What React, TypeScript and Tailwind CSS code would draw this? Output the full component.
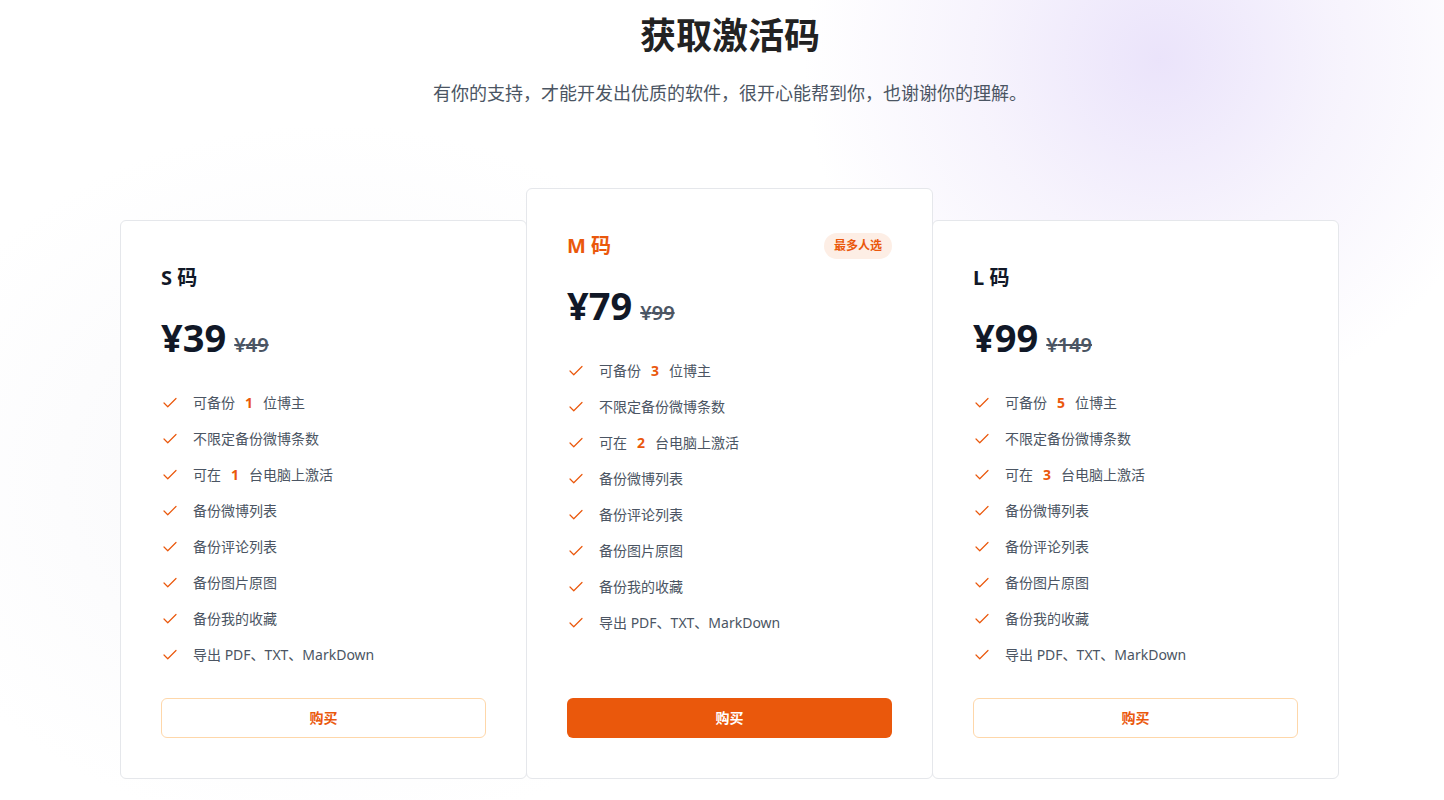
import { Check } from "lucide-react"

type Plan = {
  name: string
  price: number
  was: number
  backup: number
  devices: number
  featured?: boolean
}

const plans: Plan[] = [
  { name: "S 码", price: 39, was: 49, backup: 1, devices: 1 },
  { name: "M 码", price: 79, was: 99, backup: 3, devices: 2, featured: true },
  { name: "L 码", price: 99, was: 149, backup: 5, devices: 3 },
]

const extras = ["备份微博列表", "备份评论列表", "备份图片原图", "备份我的收藏", "导出 PDF、TXT、MarkDown"]

function Feature({ children }: { children: React.ReactNode }) {
  return (
    <li className="flex h-9 items-center gap-3.5 text-sm text-[#4b5563]">
      <Check className="h-[18px] w-[18px] shrink-0 text-[#ea580c]" strokeWidth={1.6} />
      <span>{children}</span>
    </li>
  )
}

function Num({ n }: { n: number }) {
  return <span className="mx-2.5 font-bold text-[#ea580c]">{n}</span>
}

function PlanCard({ plan }: { plan: Plan }) {
  const hot = plan.featured
  return (
    <div
      className={`relative -ml-px flex flex-col rounded-md border border-[#e5e7eb] bg-white px-10 pb-10 pt-[43px] ${
        hot ? "z-10 h-[591px]" : "h-[559px]"
      }`}
    >
      {/* Header */}
      <div className="flex h-7 items-center justify-between">
        <h3 className={`text-xl font-bold ${hot ? "text-[#ea580c]" : "text-[#111827]"}`}>{plan.name}</h3>
        {hot && (
          <span className="rounded-full bg-[#fdeee5] px-2.5 py-[5px] text-xs font-bold text-[#ea580c]">最多人选</span>
        )}
      </div>

      {/* Price */}
      <div className="mt-[21px] flex items-baseline gap-2">
        <span className="text-[38px] font-bold leading-[48px] text-[#111827]">¥{plan.price}</span>
        <span className="text-xl font-semibold text-[#4b5563] line-through">¥{plan.was}</span>
      </div>

      {/* Features */}
      <ul className="mt-[24px]">
        <Feature>
          可备份<Num n={plan.backup} />位博主
        </Feature>
        <Feature>不限定备份微博条数</Feature>
        <Feature>
          可在<Num n={plan.devices} />台电脑上激活
        </Feature>
        {extras.map((e) => (
          <Feature key={e}>{e}</Feature>
        ))}
      </ul>

      <button
        className={`mt-auto h-10 w-full rounded-md text-sm font-bold ${
          hot ? "bg-[#ea580c] text-white" : "border border-[#fed7aa] bg-white text-[#ea580c]"
        }`}
      >
        购买
      </button>
    </div>
  )
}

export default function App() {
  return (
    <div
      className="relative min-h-[800px] overflow-hidden bg-white"
      style={{ fontFamily: '"Noto Sans", "Noto Sans CJK SC", sans-serif' }}
    >
      {/* Background glows */}
      <div className="pointer-events-none absolute left-[800px] top-[-300px] h-[720px] w-[720px] rounded-full bg-[radial-gradient(circle,rgba(226,216,249,0.7)_0%,rgba(236,229,250,0.45)_35%,rgba(255,255,255,0)_70%)]" />
      <div className="pointer-events-none absolute left-[-120px] top-[120px] h-[720px] w-[900px] rounded-full bg-[radial-gradient(ellipse,rgba(240,240,245,0.5)_0%,rgba(255,255,255,0)_70%)]" />

      <div className="relative pl-[16px] pt-4">
        <h1 className="text-center text-[36px] font-bold leading-10 text-[#222]">获取激活码</h1>
        <p className="mt-[23px] text-center text-lg leading-7 text-[#4b5563]">
          有你的支持，才能开发出优质的软件，很开心能帮到你，也谢谢你的理解。
        </p>

        <div className="mx-auto mt-[81px] grid w-[1218px] grid-cols-3 items-end">
          {plans.map((p) => (
            <PlanCard key={p.name} plan={p} />
          ))}
        </div>
      </div>
    </div>
  )
}
